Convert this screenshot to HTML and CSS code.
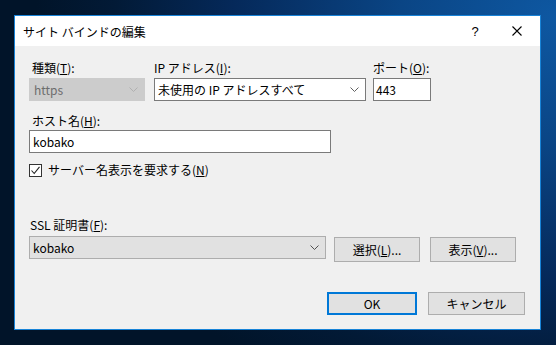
FILE: index.html
```html
<!DOCTYPE html>
<html lang="ja">
<head>
    <meta charset="UTF-8">
    <title>サイト バインドの編集</title>
    <link rel="stylesheet" href="styles.css">
</head>
<body>
    <div class="dialog">
        <div class="titlebar">
            <span class="title">サイト バインドの編集</span>
            <span class="help">?</span>
            <span class="close">
                <svg width="10" height="10" viewBox="0 0 10 10"><path d="M0.5 0.5 L9.5 9.5 M9.5 0.5 L0.5 9.5" stroke="#000" stroke-width="1.1" fill="none"/></svg>
            </span>
        </div>

        <div class="content">
            <div class="row">
                <div class="field f-type">
                    <div class="label">種類(<u>T</u>):</div>
                    <div class="combo disabled">
                        <span class="value">https</span>
                        <svg class="arrow" width="9" height="5" viewBox="0 0 9 5"><path d="M0.5 0.5 L4.5 4.5 L8.5 0.5" stroke="#b0b0b0" fill="none"/></svg>
                    </div>
                </div>
                <div class="field f-ip">
                    <div class="label">IP アドレス(<u>I</u>):</div>
                    <div class="combo white">
                        <span class="value">未使用の IP アドレスすべて</span>
                        <svg class="arrow" width="9" height="5" viewBox="0 0 9 5"><path d="M0.5 0.5 L4.5 4.5 L8.5 0.5" stroke="#606060" fill="none"/></svg>
                    </div>
                </div>
                <div class="field f-port">
                    <div class="label">ポート(<u>O</u>):</div>
                    <div class="textbox port">443</div>
                </div>
            </div>

            <div class="field f-host">
                <div class="label">ホスト名(<u>H</u>):</div>
                <div class="textbox host">kobako</div>
            </div>

            <div class="check-row">
                <span class="checkbox">
                    <svg width="11" height="11" viewBox="0 0 11 11"><path d="M1.5 5.5 L4.2 8.5 L9.5 1.8" stroke="#222" stroke-width="1.1" fill="none"/></svg>
                </span>
                <span class="check-label">サーバー名表示を要求する(<u>N</u>)</span>
            </div>

            <div class="ssl">
                <div class="label">SSL 証明書(<u>F</u>):</div>
                <div class="ssl-row">
                    <div class="combo gray">
                        <span class="value">kobako</span>
                        <svg class="arrow" width="9" height="5" viewBox="0 0 9 5"><path d="M0.5 0.5 L4.5 4.5 L8.5 0.5" stroke="#505050" fill="none"/></svg>
                    </div>
                    <button class="btn btn-select">選択(<u>L</u>)...</button>
                    <button class="btn btn-view">表示(<u>V</u>)...</button>
                </div>
            </div>

            <div class="footer">
                <button class="btn btn-ok">OK</button>
                <button class="btn btn-cancel">キャンセル</button>
            </div>
        </div>
    </div>
</body>
</html>
```

FILE: styles.css
```css
body {
    margin: 0;
    width: 556px;
    height: 345px;
    overflow: hidden;
    background: radial-gradient(ellipse 520px 420px at 100% 5%, #0e58a2 0%, #0a4585 30%, #05295a 62%, #021a36 85%, #011429 100%);
    font-family: "Noto Sans CJK JP", "Noto Sans", sans-serif;
    font-size: 12px;
    color: #000;
}

.dialog {
    margin: 15px 0 0 14px;
    width: 525px;
    height: 313px;
    border: 1px solid #1883d7;
    background: #f0f0f0;
    display: flex;
    flex-direction: column;
}

.titlebar {
    height: 30px;
    background: #fff;
    display: flex;
    align-items: center;
    padding-left: 8px;
}

.title {
    flex: 1;
    font-size: 12px;
}

.help {
    width: 14px;
    text-align: center;
    margin-right: 30px;
    font-family: "Liberation Sans", sans-serif;
    font-size: 13px;
}

.close {
    display: flex;
    margin-right: 18px;
}

.content {
    padding: 14px 0 0 14px;
    display: flex;
    flex-direction: column;
}

.label {
    height: 16px;
    line-height: 16px;
    padding-left: 3px;
    margin-bottom: 2px;
}

.row {
    display: flex;
}

.f-ip {
    margin-left: 9px;
}

.f-ip .label {
    padding-left: 0;
}

.f-port {
    margin-left: 7px;
}

.f-port .label {
    padding-left: 0;
}

.combo {
    height: 21px;
    border: 1px solid #7a7a7a;
    display: flex;
    align-items: center;
    box-sizing: content-box;
}

.combo .value {
    flex: 1;
    white-space: nowrap;
}

.combo .arrow {
    margin-right: 6px;
}

.combo.disabled {
    width: 114px;
    background: #cccccc;
    border-color: #cccccc;
    color: #6d6d6d;
}

.combo.disabled .value {
    padding-left: 4px;
}

.combo.white {
    width: 210px;
    background: #fff;
}

.combo.white .value {
    padding-left: 3px;
}

.combo.gray {
    width: 295px;
    background: #e1e1e1;
    border-color: #adadad;
}

.combo.gray .value {
    padding-left: 3px;
}

.textbox {
    height: 21px;
    line-height: 21px;
    border: 1px solid #7a7a7a;
    background: #fff;
    white-space: nowrap;
}

.textbox.port {
    width: 54px;
    padding-left: 2px;
}

.f-host {
    margin-top: 12px;
}

.f-host .label {
    margin-bottom: 1px;
}

.textbox.host {
    width: 297px;
    padding-left: 3px;
}

.check-row {
    display: flex;
    align-items: center;
    margin-top: 10px;
}

.checkbox {
    width: 11px;
    height: 11px;
    border: 1px solid #333;
    background: #fff;
    display: flex;
}

.check-label {
    margin-left: 6px;
    line-height: 14px;
}

.ssl {
    margin-top: 40px;
}

.ssl .label {
    padding-left: 1px;
    margin-bottom: 3px;
}

.ssl-row {
    display: flex;
    align-items: flex-start;
}

.btn {
    font-family: inherit;
    font-size: 12px;
    color: #000;
    background: #e1e1e1;
    border: 1px solid #adadad;
    padding: 0;
    margin: 0;
    box-sizing: border-box;
}

.btn-select,
.btn-view {
    width: 86px;
    height: 25px;
    margin-top: 1px;
}

.btn-select {
    margin-left: 8px;
}

.btn-view {
    margin-left: 10px;
}

.footer {
    display: flex;
    margin-top: 30px;
    padding-left: 298px;
}

.btn-ok {
    width: 90px;
    height: 23px;
    border: 2px solid #0078d7;
}

.btn-cancel {
    width: 97px;
    height: 23px;
    margin-left: 11px;
}
```
